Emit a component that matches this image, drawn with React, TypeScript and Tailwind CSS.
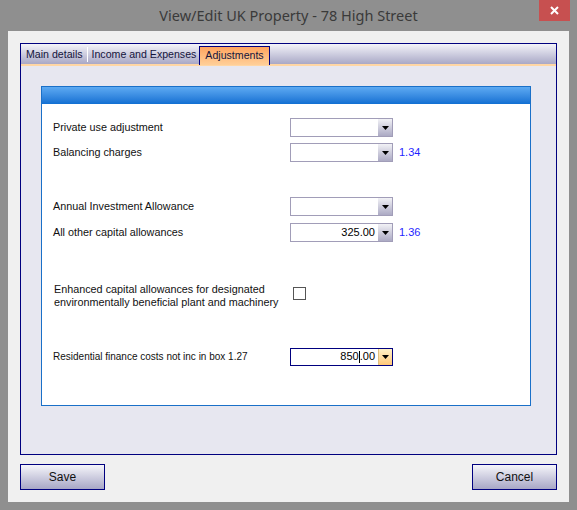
import React from "react";

const Arrow = () => (
  <svg width="7" height="4" viewBox="0 0 7 4" className="block">
    <path d="M0 0 H7 L3.5 4 Z" fill="#000" />
  </svg>
);

const Combo = ({ value }: { value?: string }) => (
  <div className="flex h-[19px] w-[103px] border border-[#a19db8] bg-white">
    <div className="flex flex-1 items-center justify-end pr-[3px] text-[11px] text-black">{value}</div>
    <div className="flex w-[14px] items-center justify-center bg-gradient-to-b from-[#f2f2f6] to-[#acaac4]">
      <Arrow />
    </div>
  </div>
);

const Row = ({ label, value, box }: { label: string; value?: string; box?: string }) => (
  <div className="flex h-[19px] items-center">
    <div className="w-[237px] text-[10.8px] text-[#111]">{label}</div>
    <Combo value={value} />
    {box && <div className="ml-[6px] text-[11px] text-[#1f1fff]">{box}</div>}
  </div>
);

export default function App() {
  return (
    <div
      className="flex h-[510px] w-[577px] flex-col bg-[#8f8f8f]"
      style={{ fontFamily: '"Liberation Sans", Arial, sans-serif' }}
    >
      {/* title bar */}
      <div className="relative h-[31px]">
        <div
          className="flex h-[31px] items-center justify-center text-[14.5px] text-[#3a3a3a]"
          style={{ fontFamily: '"Noto Sans", "Open Sans", sans-serif' }}
        >
          View/Edit UK Property - 78 High Street
        </div>
        <div className="absolute right-[7px] top-0 flex h-[21px] w-[31px] items-center justify-center bg-[#c75050]">
          <svg width="9" height="9" viewBox="0 0 9 9">
            <path d="M1 1 L8 8 M8 1 L1 8" stroke="#fff" strokeWidth="2" />
          </svg>
        </div>
      </div>

      {/* content */}
      <div className="mx-[8px] mb-[8px] flex flex-1 flex-col bg-[#f0f0f0] px-[12px] pt-[12px]">
        {/* tab panel */}
        <div className="flex h-[412px] flex-col border border-[#00007f] bg-[#e7e7f0]">
          <div className="relative flex h-[20px] items-end bg-gradient-to-b from-[#f4f4f9] to-[#a9a8c6] text-[10.6px] text-[#14143c]">
            <div className="flex h-[18px] items-center pl-[5px] pr-[4px]">Main details</div>
            <div className="mb-[2px] h-[15px] w-px bg-[#ffffff]" />
            <div className="flex h-[18px] items-center pl-[4px] pr-[3px]">Income and Expenses</div>
            <div className="relative z-10 -mb-[1px] flex h-[19px] items-center border border-b-0 border-[#00007f] bg-gradient-to-b from-[#ffa45e] to-[#ffcf98] px-[5px]">
              Adjustments
            </div>
          </div>
          <div className="h-[2px] bg-[#ffd6a4]" />
          <div className="flex-1 pl-[20px] pt-[20px]">
            <div className="flex h-[320px] w-[490px] flex-col border border-[#1a70c8] bg-white">
              <div className="h-[17px] bg-gradient-to-b from-[#5daaf2] to-[#0f6fd2]" />
              <div className="flex flex-col pl-[11px] pt-[14px]">
                <div className="flex flex-col gap-[6px]">
                  <Row label="Private use adjustment" />
                  <Row label="Balancing charges" box="1.34" />
                </div>
                <div className="mt-[35px] flex flex-col gap-[7px]">
                  <Row label="Annual Investment Allowance" />
                  <Row label="All other capital allowances" value="325.00" box="1.36" />
                </div>
                <div className="mt-[40px] flex items-start">
                  <div className="w-[240px] pl-[1px] pt-[1px] text-[10.8px] leading-[13px] text-[#111]">
                    Enhanced capital allowances for designated environmentally beneficial plant and machinery
                  </div>
                  <div className="mt-[5px] h-[13px] w-[13px] border border-[#555] bg-white" />
                </div>
                <div className="mt-[38px] flex h-[19px] items-center">
                  <div className="w-[237px] text-[10px] text-[#111]">
                    Residential finance costs not inc in box 1.27
                  </div>
                  <div className="flex h-[18px] w-[103px] border border-[#00007f] bg-white">
                    <div className="flex flex-1 items-center justify-end pr-[3px] text-[11px] text-black">
                      850<span className="inline-block h-[12px] w-px bg-black" />.00
                    </div>
                    <div className="flex w-[14px] items-center justify-center border-l border-[#e0c080] bg-gradient-to-b from-[#fff2c8] to-[#ffc878]">
                      <Arrow />
                    </div>
                  </div>
                </div>
              </div>
            </div>
          </div>
        </div>

        {/* buttons */}
        <div className="mt-[9px] flex justify-between">
          <div className="flex h-[26px] w-[85px] items-center justify-center border border-[#00007f] bg-gradient-to-b from-[#f6f6fa] to-[#a8a7c6] text-[12px] text-[#111]">
            Save
          </div>
          <div className="flex h-[26px] w-[85px] items-center justify-center border border-[#00007f] bg-gradient-to-b from-[#f6f6fa] to-[#a8a7c6] text-[12px] text-[#111]">
            Cancel
          </div>
        </div>
      </div>
    </div>
  );
}
